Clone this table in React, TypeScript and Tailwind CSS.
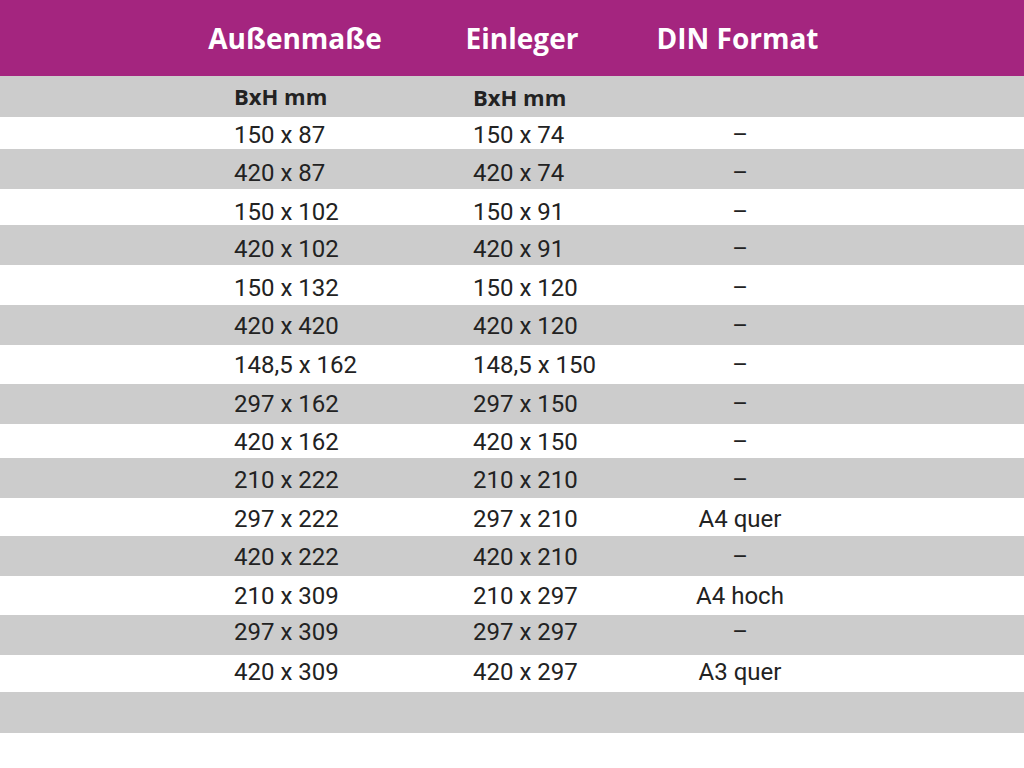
import React from 'react';

interface Row {
  outer: string;
  inner: string;
  din: string;
  // height of the band and a small nudge for the text inside it
  cls: string;
}

const rows: Row[] = [
  { outer: '150 x 87', inner: '150 x 74', din: '–', cls: 'h-[32px] bg-white pt-[3px]' },
  { outer: '420 x 87', inner: '420 x 74', din: '–', cls: 'h-[40px] bg-[#cccccc] pt-[7px]' },
  { outer: '150 x 102', inner: '150 x 91', din: '–', cls: 'h-[36px] bg-white pt-[9px]' },
  { outer: '420 x 102', inner: '420 x 91', din: '–', cls: 'h-[40px] bg-[#cccccc] pt-[7px]' },
  { outer: '150 x 132', inner: '150 x 120', din: '–', cls: 'h-[40px] bg-white pt-[6px]' },
  { outer: '420 x 420', inner: '420 x 120', din: '–', cls: 'h-[40px] bg-[#cccccc] pt-[2px]' },
  { outer: '148,5 x 162', inner: '148,5 x 150', din: '–', cls: 'h-[39px] bg-white' },
  { outer: '297 x 162', inner: '297 x 150', din: '–', cls: 'h-[40px] bg-[#cccccc]' },
  { outer: '420 x 162', inner: '420 x 150', din: '–', cls: 'h-[34px] bg-white pt-[2px]' },
  { outer: '210 x 222', inner: '210 x 210', din: '–', cls: 'h-[40px] bg-[#cccccc] pt-[4px]' },
  { outer: '297 x 222', inner: '297 x 210', din: 'A4 quer', cls: 'h-[38px] bg-white pt-[3px]' },
  { outer: '420 x 222', inner: '420 x 210', din: '–', cls: 'h-[40px] bg-[#cccccc] pt-[2px]' },
  { outer: '210 x 309', inner: '210 x 297', din: 'A4 hoch', cls: 'h-[39px] bg-white' },
  { outer: '297 x 309', inner: '297 x 297', din: '–', cls: 'h-[40px] bg-[#cccccc] pb-[6px]' },
  { outer: '420 x 309', inner: '420 x 297', din: 'A3 quer', cls: 'h-[37px] bg-white pb-[4px]' },
];

export default function App() {
  return (
    <div className="w-[1024px] h-[768px] bg-white text-[#222222] font-['Roboto',sans-serif] overflow-hidden">
      {/* Kopfzeile */}
      <div className="h-[76px] bg-[#a4257f] flex items-center pl-[175px] text-white font-['Open_Sans',sans-serif] font-bold text-[28px]">
        <div className="w-[240px] text-center">Außenmaße</div>
        <div className="w-[214px] text-center">Einleger</div>
        <div className="w-[217px] text-center">DIN Format</div>
      </div>

      {/* Einheiten */}
      <div className="h-[41px] bg-[#cccccc] flex items-center pl-[234px] font-['Open_Sans',sans-serif] font-bold text-[22px]">
        <div className="w-[239px]">BxH mm</div>
        <div className="w-[147px] pt-[2px]">BxH mm</div>
      </div>

      {rows.map((r) => (
        <div key={r.outer + r.inner} className={`flex items-center pl-[234px] text-[24px] leading-none ${r.cls}`}>
          <div className="w-[239px]">{r.outer}</div>
          <div className="w-[147px]">{r.inner}</div>
          <div className="w-[240px] text-center">{r.din}</div>
        </div>
      ))}

      <div className="h-[41px] bg-[#cccccc]" />
    </div>
  );
}
